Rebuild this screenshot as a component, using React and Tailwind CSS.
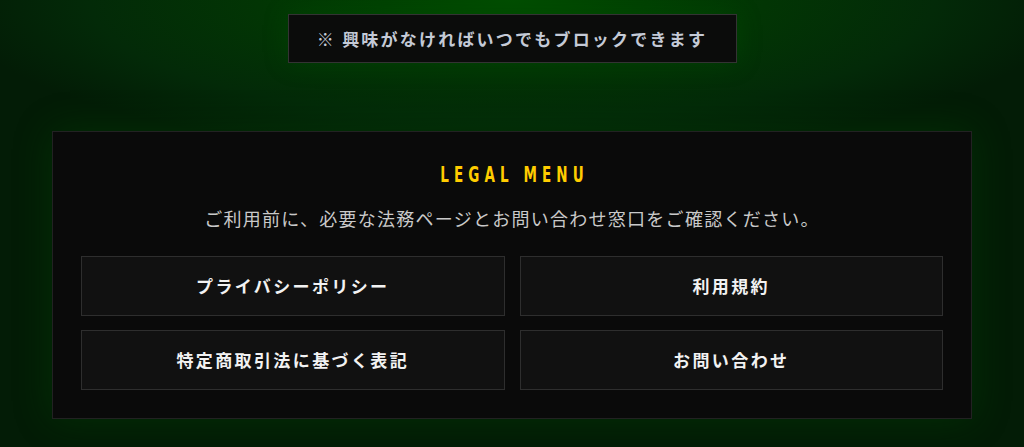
import React from "react";

const links = ["プライバシーポリシー", "利用規約", "特定商取引法に基づく表記", "お問い合わせ"];

const jp = { fontFamily: '"Noto Sans CJK JP", "Noto Sans", sans-serif' };

export default function App() {
  return (
    <div
      className="min-h-[447px] w-full flex flex-col items-center bg-[radial-gradient(ellipse_55%_35%_at_50%_0%,#004d00_0%,#023504_45%,#032a08_75%,#031c06_100%)]"
      style={jp}
    >
      <div className="mt-[14px] w-[449px] h-[49px] flex items-center justify-center border border-[#333] bg-[#0b0c0b] shadow-[0_0_24px_rgba(0,90,0,0.3)]">
        <p className="text-[17px] font-bold tracking-[0.13em] text-[#c4cad6]">※ 興味がなければいつでもブロックできます</p>
      </div>

      <div className="mt-[68px] w-[920px] border border-[#222] bg-[#0a0a0a] px-[28px] pt-[32px] pb-[28px] shadow-[0_0_36px_rgba(0,90,0,0.3)]">
        <div className="flex justify-center">
          <h2
            className="inline-block scale-y-[1.45] text-[15px] font-bold tracking-[0.34em] pl-[0.34em] text-[#ffcc00]"
            style={{ fontFamily: '"Liberation Sans Narrow", "DejaVu Sans Condensed", sans-serif' }}
          >
            LEGAL MENU
          </h2>
        </div>
        <p className="mt-[18px] text-center text-[18px] tracking-[0.07em] text-[#c9c9c9]">
          ご利用前に、必要な法務ページとお問い合わせ窓口をご確認ください。
        </p>
        <div className="mt-[24px] grid grid-cols-2 gap-x-[15px] gap-y-[14px]">
          {links.map((l) => (
            <a
              key={l}
              href="#"
              className="h-[60px] flex items-center justify-center border border-[#2e2e2e] bg-[#111] text-[17px] font-bold tracking-[0.14em] text-[#f2f2f2]"
            >
              {l}
            </a>
          ))}
        </div>
      </div>
    </div>
  );
}
